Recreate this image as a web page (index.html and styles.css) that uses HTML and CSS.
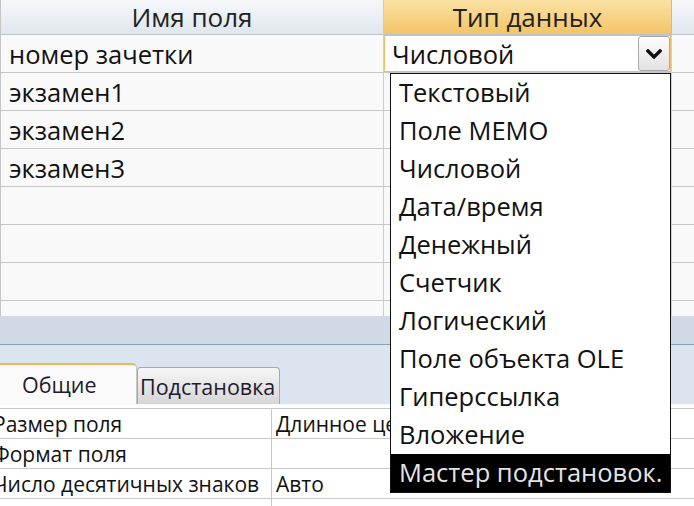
FILE: index.html
```html
<!DOCTYPE html>
<html lang="ru">
<head>
<meta charset="utf-8">
<link rel="stylesheet" href="styles.css">
</head>
<body>
<div class="screen">
  <div class="table">
    <div class="thead">
      <div class="th c1">Имя поля</div>
      <div class="th c2 active">Тип данных</div>
      <div class="th c3"></div>
    </div>
    <div class="row">
      <div class="td c1">номер зачетки</div>
      <div class="td c2 sel">
        <span class="val">Числовой</span>
        <span class="btn"><svg width="16" height="10" viewBox="0 0 16 10"><polyline points="2,2 8,8 14,2" fill="none" stroke="#111" stroke-width="3.4" stroke-linecap="square"/></svg></span>
      </div>
      <div class="td c3"></div>
    </div>
    <div class="row"><div class="td c1">экзамен1</div><div class="td c2"></div><div class="td c3"></div></div>
    <div class="row"><div class="td c1">экзамен2</div><div class="td c2"></div><div class="td c3"></div></div>
    <div class="row"><div class="td c1">экзамен3</div><div class="td c2"></div><div class="td c3"></div></div>
    <div class="row"><div class="td c1"></div><div class="td c2"></div><div class="td c3"></div></div>
    <div class="row"><div class="td c1"></div><div class="td c2"></div><div class="td c3"></div></div>
    <div class="row"><div class="td c1"></div><div class="td c2"></div><div class="td c3"></div></div>
    <div class="row partial"><div class="td c1"></div><div class="td c2"></div><div class="td c3"></div></div>
  </div>
  <div class="splitter"></div>
  <div class="props">
    <div class="tabs">
      <div class="tab on">Общие</div>
      <div class="tab">Подстановка</div>
    </div>
    <div class="ptable">
      <div class="prow"><div class="pl">Размер поля</div><div class="pv">Длинное целое</div></div>
      <div class="prow"><div class="pl">Формат поля</div><div class="pv"></div></div>
      <div class="prow"><div class="pl">Число десятичных знаков</div><div class="pv">Авто</div></div>
      <div class="prow"><div class="pl"></div><div class="pv"></div></div>
    </div>
  </div>
  <ul class="dropdown">
    <li>Текстовый</li>
    <li>Поле MEMO</li>
    <li>Числовой</li>
    <li>Дата/время</li>
    <li>Денежный</li>
    <li>Счетчик</li>
    <li>Логический</li>
    <li>Поле объекта OLE</li>
    <li>Гиперссылка</li>
    <li>Вложение</li>
    <li class="hi">Мастер подстановок.</li>
  </ul>
</div>
</body>
</html>
```
FILE: styles.css
```css
* { box-sizing: border-box; }
html, body { margin: 0; padding: 0; }
body {
  width: 694px;
  height: 506px;
  overflow: hidden;
  font-family: "Open Sans", "Noto Sans", sans-serif;
  color: #111;
  background: #f8f8f8;
}
.screen {
  position: relative;
  width: 694px;
  height: 506px;
  overflow: hidden;
}
.table {
  border-left: 1px solid #c4c4c4;
  background: #f8f8f8;
}
.thead {
  display: flex;
  height: 35px;
  border-bottom: 1px solid #b9c3cd;
}
.th {
  display: flex;
  align-items: center;
  justify-content: center;
  font-size: 26px;
  color: #222;
  padding-bottom: 1px;
  background: linear-gradient(#f6f8fa, #dfe6ee);
}
.c1 { width: 383px; border-right: 1px solid #c6ccd2; }
.c2 { width: 288px; border-right: 1px solid #d0d0d0; }
.c3 { flex: 1; }
.th.active {
  background: linear-gradient(#fbe2a4, #f3c466);
  border-right: 1px solid #e0b870;
}
.row {
  display: flex;
  height: 38px;
  border-bottom: 1px solid #c8c8c8;
}
.row.partial { height: 15px; border-bottom: none; }
.td {
  display: flex;
  align-items: center;
  font-size: 25.5px;
  padding-left: 8px;
  background: #f9f9f9;
}
.td.c1 { border-right: 1px solid #cdcdcd; }
.td.sel {
  position: relative;
  background: #fff;
  box-shadow: inset 0 0 0 1px #f1bd68;
  justify-content: space-between;
  padding-left: 8px;
  padding-right: 1px;
}
.btn {
  display: flex;
  align-items: center;
  justify-content: center;
  width: 32px;
  height: 35px;
  border: 1px solid #a9a9a9;
  border-radius: 3px;
  background: linear-gradient(#fdfdfd, #e2e2e2);
}
.splitter {
  height: 47px;
  background: linear-gradient(#cfdae6 0, #cfdae6 28px, #8d9fb2 28px, #8d9fb2 29px, #dbe5ef 29px);
}
.props {
  background: #fff;
}
.tabs {
  display: flex;
  align-items: flex-end;
  height: 42px;
  background: #dbe5ef;
  border-bottom: 1px solid #f6f6f6;
}
.tab {
  display: flex;
  align-items: center;
  font-size: 21.5px;
  color: #221a2c;
  white-space: nowrap;
}
.tab.on {
  width: 137px;
  height: 41px;
  padding-left: 22px;
  background: #fafafa;
  border-top: 2px solid #efb451;
  border-right: 1px solid #c5c5c5;
  border-top-right-radius: 5px;
}
.tab:not(.on) {
  width: 143px;
  height: 37px;
  padding-left: 2px;
  background: linear-gradient(#f6f6f6, #d6d6d6);
  border: 1px solid #a9a9a9;
  border-bottom: none;
  border-radius: 4px 4px 0 0;
}
.ptable {
  margin-top: 3px;
  border-top: 1px solid #c8c8c8;
}
.prow {
  display: flex;
  height: 30px;
  border-bottom: 1px solid #c8c8c8;
}
.pl, .pv {
  display: flex;
  align-items: center;
  font-size: 21px;
  white-space: nowrap;
  overflow: hidden;
}
.pl {
  width: 272px;
  text-indent: -7px;
  border-right: 1px solid #c8c8c8;
}
.pv {
  flex: 1;
  padding-left: 4px;
}
.dropdown {
  position: absolute;
  left: 390px;
  top: 73px;
  width: 281px;
  margin: 0;
  padding: 0;
  list-style: none;
  background: #fff;
  border: 1px solid #111;
}
.dropdown li {
  height: 38px;
  display: flex;
  align-items: center;
  padding-left: 8px;
  padding-bottom: 3px;
  font-size: 25.5px;
  white-space: nowrap;
}
.dropdown li.hi {
  background: #000;
  color: #e4e4e4;
}
```
